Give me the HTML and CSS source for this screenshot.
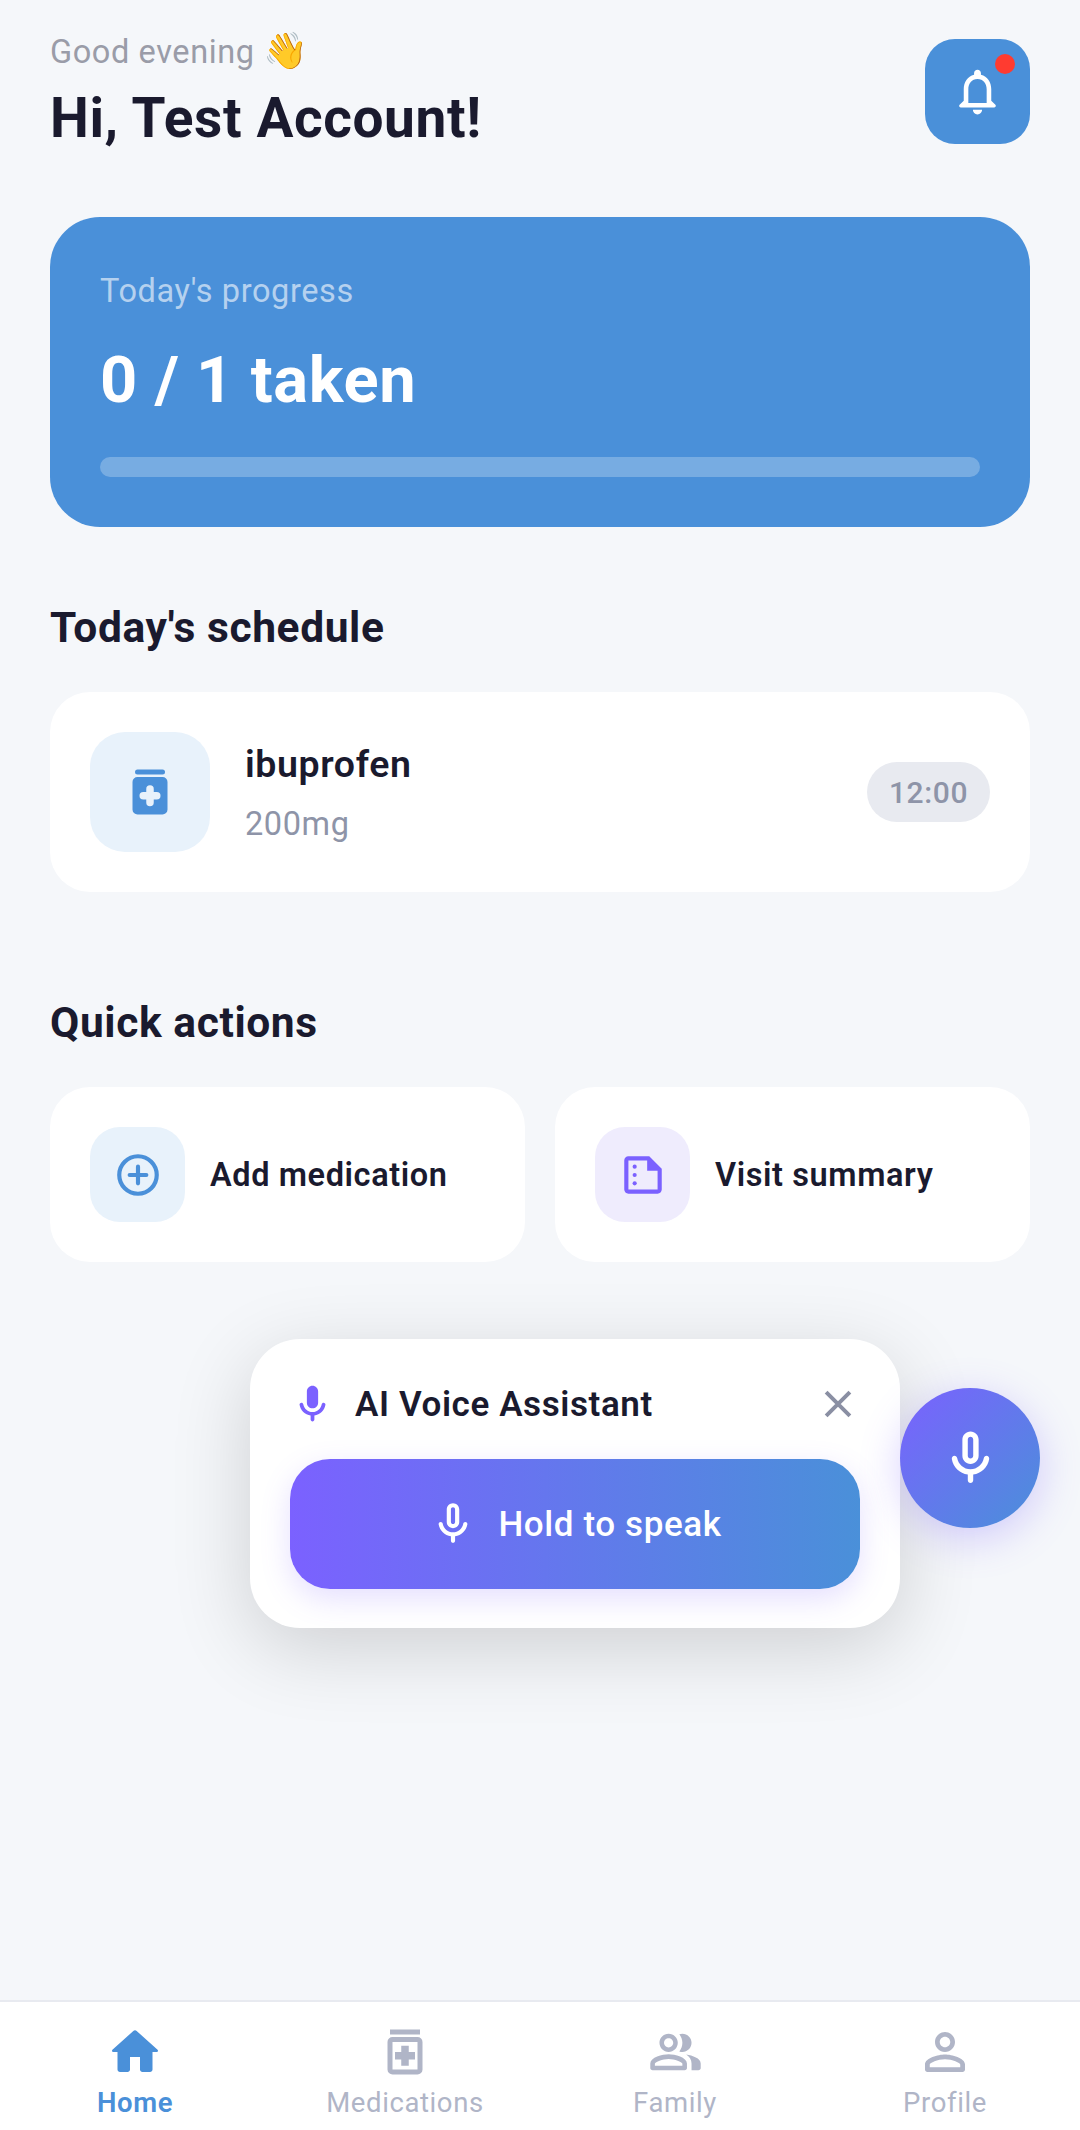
FILE: index.html
```html
<!DOCTYPE html>
<html lang="en">
<head>
<meta charset="utf-8">
<title>Home</title>
<link rel="stylesheet" href="styles.css">
</head>
<body>
<div class="page">
  <main class="main">
    <header class="header">
      <div class="greet">
        <p class="greet-sub">Good evening <span class="wave">👋</span></p>
        <h1 class="greet-name">Hi, Test Account!</h1>
      </div>
      <button class="bell">
        <svg class="ic55" viewBox="0 0 24 24"><path fill="#fff" d="M12 22c1.1 0 2-.9 2-2h-4c0 1.1.9 2 2 2zm6-6v-5c0-3.07-1.63-5.64-4.5-6.32V4c0-.83-.67-1.5-1.5-1.5s-1.5.67-1.5 1.5v.68C7.64 5.36 6 7.92 6 11v5l-1.7 1.7c-.63.63-.19 1.3.7 1.3h14c.89 0 1.33-.67.7-1.3L18 16zm-2 1H8v-6c0-2.48 1.51-4.5 4-4.5s4 2.02 4 4.5v6z"/></svg>
        <span class="dot"></span>
      </button>
    </header>

    <section class="hero">
      <p class="hero-label">Today's progress</p>
      <p class="hero-value">0 / 1 taken</p>
      <div class="bar"></div>
    </section>

    <h2 class="title title-schedule">Today's schedule</h2>
    <section class="med card">
      <div class="med-icon">
        <svg class="ic60" viewBox="0 0 24 24"><rect x="6" y="3" width="12" height="2" rx="1" fill="#4a90d9"/><path fill="#4a90d9" fill-rule="evenodd" d="M7 6h10a2 2 0 0 1 2 2v11a2 2 0 0 1-2 2H7a2 2 0 0 1-2-2V8a2 2 0 0 1 2-2z M10.5 11V10.8a1.5 1.5 0 0 1 3 0V12h1.2a1.5 1.5 0 0 1 0 3H13.5v1.2a1.5 1.5 0 0 1-3 0V15H9.3a1.5 1.5 0 0 1 0-3h1.2z"/></svg>
      </div>
      <div class="med-text">
        <p class="med-name">ibuprofen</p>
        <p class="med-dose">200mg</p>
      </div>
      <span class="time">12:00</span>
    </section>

    <h2 class="title title-quick">Quick actions</h2>
    <section class="actions">
      <div class="action card">
        <div class="action-icon blue">
          <svg class="ic50" viewBox="0 0 24 24" fill="none" stroke="#4a90d9" stroke-width="2" stroke-linecap="round"><circle cx="12" cy="12" r="9"/><path d="M12 8v8M8 12h8"/></svg>
        </div>
        <span class="action-label">Add medication</span>
      </div>
      <div class="action card">
        <div class="action-icon violet">
          <svg class="ic50" viewBox="0 0 24 24"><path fill="#7b61ff" fill-rule="evenodd" d="M15 3H5c-1.1 0-2 .9-2 2v14c0 1.1.9 2 2 2h14c1.1 0 2-.9 2-2V9l-6-6z M5 5h9v5h5v9H5z"/><circle cx="8" cy="8" r="1" fill="#7b61ff"/><circle cx="8" cy="12" r="1" fill="#7b61ff"/><circle cx="8" cy="16" r="1" fill="#7b61ff"/></svg>
        </div>
        <span class="action-label">Visit summary</span>
      </div>
    </section>
  </main>

  <nav class="nav">
    <div class="nav-item active">
      <svg class="ic60" viewBox="0 0 24 24"><path fill="#4a90d9" d="M10 19v-5h4v5c0 .55.45 1 1 1h3c.55 0 1-.45 1-1v-7h1.7c.46 0 .68-.57.33-.87L12.67 3.6c-.38-.34-.96-.34-1.34 0l-8.36 7.53c-.34.3-.13.87.33.87H5v7c0 .55.45 1 1 1h3c.55 0 1-.45 1-1z"/></svg>
      <span>Home</span>
    </div>
    <div class="nav-item">
      <svg class="ic60" viewBox="0 0 24 24"><path fill="#b0b5c7" fill-rule="evenodd" d="M6 3h12v2H6z M7 6h10a2 2 0 0 1 2 2v11a2 2 0 0 1-2 2H7a2 2 0 0 1-2-2V8a2 2 0 0 1 2-2z M7 8v11h10V8z"/><path fill="#b0b5c7" d="M10.5 9.5h3V12H16v3h-2.5v2.5h-3V15H8v-3h2.5z"/></svg>
      <span>Medications</span>
    </div>
    <div class="nav-item">
      <svg class="ic55" viewBox="0 0 24 24"><path fill="#b0b5c7" d="M16.67 13.13C18.04 14.06 19 15.32 19 17v3h3c.55 0 1-.45 1-1v-2c0-2.18-3.57-3.47-6.33-3.87zM15 12c2.21 0 4-1.79 4-4s-1.79-4-4-4c-.47 0-.91.1-1.33.24C14.5 5.27 15 6.58 15 8s-.5 2.73-1.33 3.76c.42.14.86.24 1.33.24zM9 12c2.21 0 4-1.79 4-4s-1.79-4-4-4-4 1.79-4 4 1.79 4 4 4zm0-6c1.1 0 2 .9 2 2s-.9 2-2 2-2-.9-2-2 .9-2 2-2zM9 13c-2.67 0-8 1.34-8 4v2c0 .55.45 1 1 1h14c.55 0 1-.45 1-1v-2c0-2.66-5.33-4-8-4zm6 5H3v-.99C3.2 16.29 6.3 15 9 15s5.8 1.29 6 2z"/></svg>
      <span>Family</span>
    </div>
    <div class="nav-item">
      <svg class="ic60" viewBox="0 0 24 24"><path fill="#b0b5c7" d="M12 5.9c1.16 0 2.1.94 2.1 2.1s-.94 2.1-2.1 2.1S9.9 9.16 9.9 8s.94-2.1 2.1-2.1m0 9c2.97 0 6.1 1.46 6.1 2.1v1.1H5.9V17c0-.64 3.13-2.1 6.1-2.1M12 4C9.79 4 8 5.79 8 8s1.79 4 4 4 4-1.79 4-4-1.79-4-4-4zm0 9c-2.67 0-8 1.34-8 4v2c0 .55.45 1 1 1h14c.55 0 1-.45 1-1v-2c0-2.66-5.33-4-8-4z"/></svg>
      <span>Profile</span>
    </div>
  </nav>

  <aside class="panel">
    <div class="panel-head">
      <svg class="ic45" viewBox="0 0 24 24"><path fill="#7b61ff" d="M12 14c1.66 0 3-1.34 3-3V5c0-1.66-1.34-3-3-3S9 3.34 9 5v6c0 1.66 1.34 3 3 3zM17.9 11c-.49 0-.9.36-.98.85C16.52 14.2 14.47 16 12 16s-4.52-1.8-4.92-4.15c-.08-.49-.49-.85-.98-.85-.61 0-1.09.54-1 1.14.49 3 2.89 5.35 5.9 5.78V20c0 .55.45 1 1 1s1-.45 1-1v-2.08c3.01-.43 5.41-2.78 5.9-5.78.1-.6-.39-1.14-1-1.14z"/></svg>
      <span class="panel-title">AI Voice Assistant</span>
      <svg class="ic50 close" viewBox="0 0 24 24" fill="none" stroke="#8a8fa3" stroke-width="1.9"><path d="M6.3 6.3l11.4 11.4M17.7 6.3L6.3 17.7"/></svg>
    </div>
    <button class="speak">
      <svg class="ic50" viewBox="0 0 24 24"><path fill="#fff" d="M12 14c1.66 0 3-1.34 3-3V5c0-1.66-1.34-3-3-3S9 3.34 9 5v6c0 1.66 1.34 3 3 3zm-1-9c0-.55.45-1 1-1s1 .45 1 1v6c0 .55-.45 1-1 1s-1-.45-1-1V5zM17.9 11c-.49 0-.9.36-.98.85C16.52 14.2 14.47 16 12 16s-4.52-1.8-4.92-4.15c-.08-.49-.49-.85-.98-.85-.61 0-1.09.54-1 1.14.49 3 2.89 5.35 5.9 5.78V20c0 .55.45 1 1 1s1-.45 1-1v-2.08c3.01-.43 5.41-2.78 5.9-5.78.1-.6-.39-1.14-1-1.14z"/></svg>
      <span>Hold to speak</span>
    </button>
  </aside>

  <button class="fab">
    <svg class="ic65" viewBox="0 0 24 24"><path fill="#fff" d="M12 14c1.66 0 3-1.34 3-3V5c0-1.66-1.34-3-3-3S9 3.34 9 5v6c0 1.66 1.34 3 3 3zm-1-9c0-.55.45-1 1-1s1 .45 1 1v6c0 .55-.45 1-1 1s-1-.45-1-1V5zM17.9 11c-.49 0-.9.36-.98.85C16.52 14.2 14.47 16 12 16s-4.52-1.8-4.92-4.15c-.08-.49-.49-.85-.98-.85-.61 0-1.09.54-1 1.14.49 3 2.89 5.35 5.9 5.78V20c0 .55.45 1 1 1s1-.45 1-1v-2.08c3.01-.43 5.41-2.78 5.9-5.78.1-.6-.39-1.14-1-1.14z"/></svg>
  </button>
</div>
</body>
</html>
```
FILE: styles.css
```css
* { box-sizing: border-box; }
html, body { margin: 0; padding: 0; }
body { background: #f5f7fa; font-family: Roboto, "Noto Sans", sans-serif; color: #1a1a2e; letter-spacing: .6px; }
p, h1, h2 { margin: 0; }
button { border: 0; padding: 0; font: inherit; letter-spacing: inherit; }
svg { display: block; flex: none; }
.ic45 { width: 45px; height: 45px; }
.ic50 { width: 50px; height: 50px; }
.ic55 { width: 55px; height: 55px; }
.ic60 { width: 60px; height: 60px; }
.ic65 { width: 65px; height: 65px; }

.page { position: relative; width: 1080px; height: 2130px; display: flex; flex-direction: column; overflow: hidden; }
.main { flex: 1; padding: 39px 50px 0; }

.header { height: 105px; display: flex; justify-content: space-between; align-items: flex-start; }
.greet-sub { height: 38px; font-size: 32.5px; line-height: 38px; color: #9a9ca8; margin-top: -7px; }
.wave { font-size: 36px; line-height: 38px; }
.greet-name { font-size: 55px; line-height: 64px; font-weight: 700; margin-top: 16px; }
.bell { position: relative; width: 105px; height: 105px; border-radius: 30px; background: #4a90d9; display: flex; align-items: center; justify-content: center; }
.dot { position: absolute; top: 15px; right: 15px; width: 20px; height: 20px; border-radius: 50%; background: #ff3b30; }

.hero { margin-top: 73px; height: 310px; border-radius: 50px; background: #4a90d9; padding: 55px 50px 0; }
.hero-label { font-size: 32.5px; line-height: 38px; color: rgba(255,255,255,.6); }
.hero-value { font-size: 65px; line-height: 76px; font-weight: 700; color: #fff; margin-top: 32px; }
.bar { height: 20px; border-radius: 10px; background: rgba(255,255,255,.25); margin-top: 39px; }

.title { font-size: 42.5px; line-height: 50px; font-weight: 700; }
.title-schedule { margin-top: 76px; }
.title-quick { margin-top: 106px; }

.card { background: #fff; }
.med { margin-top: 39px; height: 200px; border-radius: 40px; padding: 0 40px; display: flex; align-items: center; }
.med-icon { width: 120px; height: 120px; border-radius: 35px; background: #e8f2fb; display: flex; align-items: center; justify-content: center; }
.med-text { flex: 1; margin-left: 35px; }
.med-name { font-size: 37.5px; line-height: 44px; font-weight: 600; }
.med-dose { font-size: 32.5px; line-height: 38px; color: #8e94a8; margin-top: 19px; }
.time { width: 123px; height: 60px; border-radius: 30px; background: #e8eaf0; color: #8e94a8; font-size: 30px; font-weight: 500; display: flex; align-items: center; justify-content: center; }

.actions { margin-top: 39px; display: grid; grid-template-columns: 1fr 1fr; gap: 30px; }
.action { height: 175px; border-radius: 40px; padding: 0 40px; display: flex; align-items: center; gap: 25px; }
.action-icon { width: 95px; height: 95px; border-radius: 30px; display: flex; align-items: center; justify-content: center; }
.blue { background: #e8f2fb; }
.violet { background: #efecfd; }
.action-label { font-size: 32.5px; font-weight: 600; white-space: nowrap; }

.nav { height: 130px; background: #fff; border-top: 2px solid #e8eaf0; display: grid; grid-template-columns: repeat(4, 1fr); }
.nav-item { display: flex; flex-direction: column; align-items: center; justify-content: space-between; height: 117px; padding-top: 20px; font-size: 27.5px; line-height: 32px; color: #b0b5c7; }
.nav-item svg { height: 60px; }
.active { color: #4a90d9; font-weight: 600; }

.panel { position: absolute; left: 250px; top: 1339px; width: 650px; height: 289px; border-radius: 50px; background: #fff; padding: 40px; box-shadow: 0 20px 80px rgba(0,0,0,.16); }
.panel-head { display: flex; align-items: center; height: 50px; }
.panel-title { flex: 1; margin-left: 20px; font-size: 35px; font-weight: 600; }
.close { margin-right: -3px; }
.speak { margin-top: 30px; width: 100%; height: 130px; border-radius: 40px; background: linear-gradient(90deg, #7b61ff, #4a90d9); color: #fff; font-size: 35px; font-weight: 500; display: flex; align-items: center; justify-content: center; gap: 20px; box-shadow: 0 10px 30px rgba(123,97,255,.2); }

.fab { position: absolute; left: 900px; top: 1388px; width: 140px; height: 140px; border-radius: 50%; background: linear-gradient(135deg, #7b61ff, #4a90d9); display: flex; align-items: center; justify-content: center; box-shadow: 0 10px 40px rgba(123,97,255,.3); }
```
